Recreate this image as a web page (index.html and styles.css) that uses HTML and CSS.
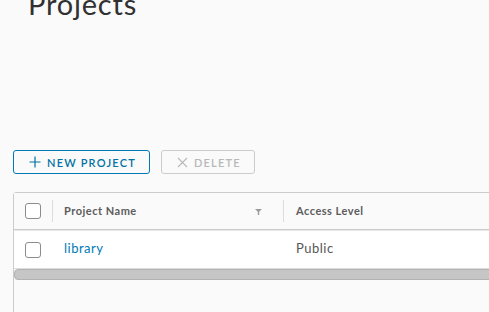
FILE: index.html
```html
<!DOCTYPE html>
<html lang="en">
<head>
  <meta charset="UTF-8">
  <title>Projects</title>
  <link rel="stylesheet" href="styles.css">
</head>
<body>
  <div class="page">
    <!-- Page title -->
    <h2 class="title">Projects</h2>

    <!-- Toolbar buttons -->
    <div class="toolbar">
      <button class="btn btn-primary">
        <svg width="12" height="12" viewBox="0 0 12 12"><path d="M6 0.5V11.5M0.5 6H11.5" stroke="#0072a3" stroke-width="1.2" fill="none"/></svg>
        New Project
      </button>
      <button class="btn btn-disabled">
        <svg width="11" height="11" viewBox="0 0 11 11"><path d="M1 1L10 10M10 1L1 10" stroke="#b8b8b8" stroke-width="1.1" fill="none"/></svg>
        Delete
      </button>
    </div>

    <!-- Projects grid -->
    <div class="grid">
      <div class="grid-row grid-head">
        <div class="cell cell-check"><span class="checkbox"></span></div>
        <div class="cell cell-name">
          <span class="sep"></span>
          <span class="head-text">Project Name</span>
          <svg class="filter" width="7" height="6" viewBox="0 0 7 6"><path d="M0 0H7L4.2 2.8V6H2.8V2.8Z" fill="#9a9a9a"/></svg>
        </div>
        <div class="cell cell-access">
          <span class="sep"></span>
          <span class="head-text">Access Level</span>
        </div>
      </div>
      <div class="grid-row grid-body">
        <div class="cell cell-check"><span class="checkbox"></span></div>
        <div class="cell cell-name"><a class="link" href="#">library</a></div>
        <div class="cell cell-access"><span class="body-text">Public</span></div>
      </div>
      <div class="scrollbar"></div>
      <div class="grid-empty"></div>
    </div>
  </div>
</body>
</html>
```

FILE: styles.css
```css
body {
  margin: 0;
  padding: 0;
  background: #fafafa;
  overflow: hidden;
  font-family: "Lato", "Open Sans", sans-serif;
  color: #565656;
}

.page {
  padding-left: 13px;
}

/* Title is partly scrolled off the top */
.title {
  margin: -14px 0 0 15px;
  font-size: 29px;
  font-weight: 400;
  line-height: 36px;
  color: #313131;
  letter-spacing: 0.8px;
}

.toolbar {
  display: flex;
  gap: 11px;
  margin-top: 128px;
}

.btn {
  display: flex;
  align-items: center;
  gap: 6px;
  height: 24px;
  padding: 0 12px;
  border-radius: 3px;
  background: transparent;
  font-family: "Lato", "Open Sans", sans-serif;
  font-size: 11px;
  font-weight: 600;
  letter-spacing: 1.2px;
  text-transform: uppercase;
  box-sizing: border-box;
}

.btn-primary {
  border: 1px solid #0079b8;
  color: #0072a3;
  width: 137px;
  padding-left: 15px;
}

.btn-disabled {
  border: 1px solid #cccccc;
  color: #b8b8b8;
  width: 94px;
  padding-left: 15px;
}

/* Grid */
.grid {
  margin-top: 18px;
  width: 700px;
  border: 1px solid #cccccc;
  border-radius: 3px 0 0 0;
  background: #fafafa;
}

.grid-row {
  display: flex;
  height: 37px;
  box-sizing: border-box;
}

.grid-head {
  background: #fafafa;
  border-bottom: 1px solid #cccccc;
  box-shadow: 0 1px 0 #e8e8e8;
  padding-bottom: 1px;
}

.grid-body {
  background: #ffffff;
  height: 38px;
  margin-top: 1px;
  border-bottom: 1px solid #dddddd;
  padding-bottom: 3px;
}

.cell {
  position: relative;
  display: flex;
  align-items: center;
  box-sizing: border-box;
}

.cell-check {
  width: 38px;
  padding-left: 11px;
}

.cell-name {
  width: 231px;
  padding-left: 12px;
}

.cell-access {
  flex: 1;
  padding-left: 13px;
}

.sep {
  position: absolute;
  left: 0;
  top: 7px;
  bottom: 6px;
  width: 1px;
  background: #dddddd;
}

.checkbox {
  width: 14px;
  height: 14px;
  border: 1px solid #8c8c8c;
  border-radius: 3px;
  background: #ffffff;
}

.grid-body .checkbox {
  margin-top: 3px;
}

.head-text {
  font-size: 11px;
  font-weight: 700;
  color: #5c5c5c;
  letter-spacing: 0.5px;
}

.filter {
  position: absolute;
  right: 21px;
  top: 16px;
}

.link {
  color: #0079b8;
  text-decoration: none;
  font-size: 13px;
  letter-spacing: 0.5px;
}

.body-text {
  font-size: 13px;
  color: #565656;
  letter-spacing: 0.5px;
}

.scrollbar {
  height: 9px;
  background: #c6c6c6;
  border: 1px solid #b3b3b3;
  border-radius: 4px 0 0 4px;
}

.grid-empty {
  height: 60px;
  background: #fafafa;
}
```
